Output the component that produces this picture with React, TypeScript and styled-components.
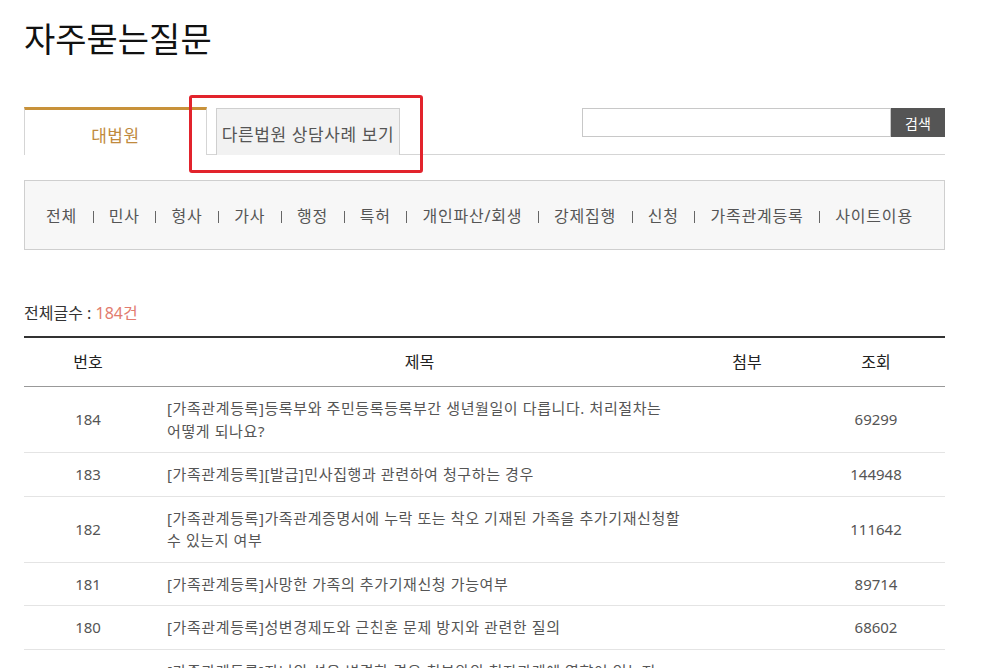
import styled, { createGlobalStyle } from "styled-components";

const GlobalStyle = createGlobalStyle`
    body {
        margin: 0;
        background: #fff;
        font-family: "Noto Sans", "Noto Sans CJK KR", sans-serif;
        color: #333;
    }
`;

const categories = ["전체", "민사", "형사", "가사", "행정", "특허", "개인파산/회생", "강제집행", "신청", "가족관계등록", "사이트이용"];

const rows = [
    { no: 184, title: "[가족관계등록]등록부와 주민등록등록부간 생년월일이 다릅니다. 처리절차는 어떻게 되나요?", views: 69299 },
    { no: 183, title: "[가족관계등록][발급]민사집행과 관련하여 청구하는 경우", views: 144948 },
    { no: 182, title: "[가족관계등록]가족관계증명서에 누락 또는 착오 기재된 가족을 추가기재신청할 수 있는지 여부", views: 111642 },
    { no: 181, title: "[가족관계등록]사망한 가족의 추가기재신청 가능여부", views: 89714 },
    { no: 180, title: "[가족관계등록]성변경제도와 근친혼 문제 방지와 관련한 질의", views: 68602 },
    { no: 179, title: "[가족관계등록]자녀의 성을 변경한 경우 친부와의 친자관계에 영향이 있는지 여부", views: 75310 },
];

const Page = styled.div`
    width: 921px;
    padding: 0 0 40px 24px;
`;

const Title = styled.h2`
    margin: 0;
    padding-top: 15px;
    font-size: 34px;
    font-weight: 400;
    line-height: 48px;
    color: #111;
`;

const TabBar = styled.div`
    position: relative;
    display: flex;
    justify-content: space-between;
    align-items: flex-start;
    height: 47px;
    margin-top: 44px;
    border-bottom: 1px solid #d5d5d5;
`;

const Tabs = styled.div`
    display: flex;
    align-items: flex-end;
    gap: 9px;
    height: 48px;
`;

const Tab = styled.div<{ $active?: boolean }>`
    display: flex;
    align-items: center;
    justify-content: center;
    box-sizing: border-box;
    font-size: 17px;
    letter-spacing: 0.6px;
    ${({ $active }) => $active ? `
        width: 183px;
        height: 48px;
        border-top: 3px solid #c8923a;
        border-left: 1px solid #d5d5d5;
        border-right: 1px solid #d5d5d5;
        background: #fff;
        color: #c08a3e;
        padding-top: 4px;
    ` : `
        width: 184px;
        height: 47px;
        border: 1px solid #cfcfcf;
        border-bottom: none;
        background: #f2f2f2;
        color: #555;
        padding-top: 2px;
    `}
`;

const Highlight = styled.div`
    position: absolute;
    top: -12px;
    left: 165px;
    width: 234px;
    height: 78px;
    box-sizing: border-box;
    border: 3px solid #e2232c;
    border-radius: 3px;
    pointer-events: none;
`;

const Search = styled.div`
    display: flex;
    margin-top: 1px;
`;

const SearchInput = styled.input`
    box-sizing: border-box;
    width: 309px;
    height: 29px;
    border: 1px solid #c8c8c8;
    outline: none;
    padding: 0 6px;
`;

const SearchButton = styled.button`
    width: 54px;
    height: 29px;
    border: none;
    background: #555;
    color: #fff;
    font-family: inherit;
    font-size: 14px;
    padding: 0;
`;

const CategoryBox = styled.div`
    display: flex;
    align-items: center;
    box-sizing: border-box;
    height: 70px;
    margin-top: 25px;
    padding: 0 21px;
    background: #f7f7f7;
    border: 1px solid #cfcfcf;
    font-size: 16px;
    letter-spacing: 0.8px;
    color: #555;
`;

const Sep = styled.span`
    display: inline-block;
    width: 1px;
    height: 12px;
    margin: 0 15px 0 15.7px;
    background: #666;
    vertical-align: -1px;
`;

const Count = styled.p`
    margin: 52px 0 0;
    font-size: 16px;
    line-height: 22px;
    color: #333;

    em {
        font-style: normal;
        color: #e27b6e;
    }
`;

const Table = styled.table`
    width: 100%;
    margin-top: 12px;
    border-collapse: collapse;
    border-top: 2px solid #333;
    table-layout: fixed;
`;

const Th = styled.th`
    padding: 13px 0;
    font-size: 16px;
    font-weight: 400;
    line-height: 22px;
    color: #222;
    border-bottom: 1px solid #999;
`;

const Td = styled.td<{ $left?: boolean }>`
    padding: ${({ $left }) => ($left ? "10px 0 10px 15px" : "10px 0")};
    text-align: ${({ $left }) => ($left ? "left" : "center")};
    font-size: 15px;
    letter-spacing: ${({ $left }) => ($left ? "0.6px" : "0")};
    line-height: 22.5px;
    color: #555;
    border-bottom: 1px solid #e4e4e4;
    word-break: keep-all;
`;

const App = () => {
    return (
        <>
            <GlobalStyle />
            <Page>
                <Title>자주묻는질문</Title>
                <TabBar>
                    <Tabs>
                        <Tab $active>대법원</Tab>
                        <Tab>다른법원 상담사례 보기</Tab>
                    </Tabs>
                    <Search>
                        <SearchInput type="text" />
                        <SearchButton>검색</SearchButton>
                    </Search>
                    <Highlight />
                </TabBar>
                <CategoryBox>
                    {categories.map((c, i) => (
                        <span key={c}>
                            {i > 0 && <Sep />}
                            {c}
                        </span>
                    ))}
                </CategoryBox>
                <Count>전체글수 : <em>184건</em></Count>
                <Table>
                    <colgroup>
                        <col style={{ width: 128 }} />
                        <col />
                        <col style={{ width: 120 }} />
                        <col style={{ width: 138 }} />
                    </colgroup>
                    <thead>
                        <tr>
                            <Th>번호</Th>
                            <Th>제목</Th>
                            <Th>첨부</Th>
                            <Th>조회</Th>
                        </tr>
                    </thead>
                    <tbody>
                        {rows.map((r) => (
                            <tr key={r.no}>
                                <Td>{r.no}</Td>
                                <Td $left>{r.title}</Td>
                                <Td></Td>
                                <Td>{r.views}</Td>
                            </tr>
                        ))}
                    </tbody>
                </Table>
            </Page>
        </>
    );
};

export default App;
